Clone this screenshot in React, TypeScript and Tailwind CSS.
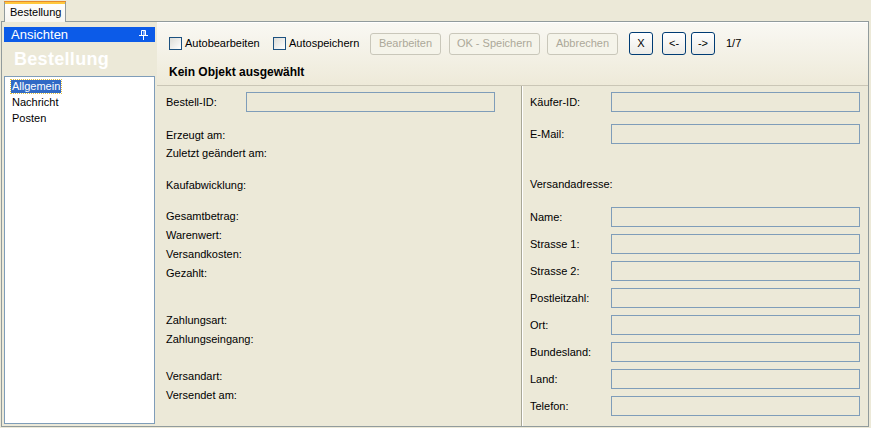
import React from 'react';

const Checkbox = ({ label, width }: { label: string; width: string }) => (
  <div className={`flex items-center ${width}`}>
    <div className="w-[13px] h-[13px] border border-[#1C5180] bg-gradient-to-br from-[#DCDCD7] to-white" />
    <span className="ml-[3px] text-[11px] leading-[13px] text-black">{label}</span>
  </div>
);

const DisabledButton = ({ label, width }: { label: string; width: string }) => (
  <div
    className={`${width} h-[22px] flex items-center justify-center rounded-[3px] border border-[#C9C7BA] bg-[#F5F4EA] text-[11px] text-[#ACA899]`}
  >
    {label}
  </div>
);

const NavButton = ({ label, width }: { label: string; width: string }) => (
  <div
    className={`${width} h-[23px] flex items-center justify-center rounded-[3px] border border-[#003C74] bg-gradient-to-b from-white to-[#ECEBE6] text-[11px] text-black`}
  >
    {label}
  </div>
);

const Field = ({ label, mt }: { label: string; mt: string }) => (
  <div className={`flex items-center h-[20px] ${mt}`}>
    <span className="w-[81px] text-[11px] leading-[20px]">{label}</span>
    <div className="w-[249px] h-[20px] border border-[#7F9DB9] bg-[#ECE9D8]" />
  </div>
);

const Label = ({ text, mt, h }: { text: string; mt?: string; h: string }) => (
  <div className={`text-[11px] ${h} ${mt ?? ''}`}>{text}</div>
);

const PinIcon = () => (
  <svg width="9" height="10" viewBox="0 0 9 10" fill="none">
    <path d="M2.5 0.5h4v5h-4z" stroke="white" strokeWidth="1" />
    <path d="M5 1v4.5" stroke="white" strokeWidth="1" />
    <path d="M0 5.5h9" stroke="white" strokeWidth="1" />
    <path d="M4.5 6v4" stroke="white" strokeWidth="1" />
  </svg>
);

export default function App() {
  return (
    <div className="w-[871px] h-[428px] bg-[#ECE9D8] font-['Liberation_Sans',Arial,sans-serif] text-black overflow-hidden">
      {/* Tab strip */}
      <div className="h-[21px] flex items-end pl-[4px]">
        <div className="relative z-10 w-[62px] h-[21px] -mb-[1px] border-x border-[#919B9C] bg-gradient-to-b from-white to-[#F7F6F1] flex flex-col">
          <div className="h-[1px] bg-[#E68B2C] -mx-[1px]" />
          <div className="h-[2px] bg-[#FFC83C]" />
          <div className="flex-1 pl-[5px] text-[11px] leading-[16px]">Bestellung</div>
        </div>
      </div>

      {/* Panel */}
      <div className="ml-[1px] w-[868px] h-[406px] border border-[#919B9C] flex">
        {/* Left column */}
        <div className="ml-[2px] w-[151px] pt-[5px] flex flex-col">
          <div className="h-[15px] bg-[#0C5BE8] flex items-center justify-between pl-[7px] pr-[7px]">
            <span className="text-white text-[13px] leading-[15px]">Ansichten</span>
            <PinIcon />
          </div>
          <div className="h-[34px] pl-[10px] pt-[5px] text-white font-bold text-[18px] leading-[24px] tracking-[0.3px]">
            Bestellung
          </div>
          <div className="h-[348px] border border-[#7F9DB9] bg-white pt-[1px] pl-[6px]">
            <div className="h-[16px] flex items-center">
              <span className="bg-[#316AC5] text-white text-[11px] leading-[13px] px-[1px] outline outline-1 outline-dotted outline-[#E0C040]">
                Allgemein
              </span>
            </div>
            <div className="h-[16px] text-[11px] leading-[16px] pl-[1px]">Nachricht</div>
            <div className="h-[17px] text-[11px] leading-[17px] pl-[1px]">Posten</div>
          </div>
        </div>

        {/* Right column */}
        <div className="ml-[2px] w-[711px] flex flex-col">
          {/* Header */}
          <div className="h-[64px] border-t border-white border-b border-b-[#CAC6B6] bg-gradient-to-b from-[#F9F8F3] to-[#EEEAD9] pl-[12px] pt-[9px]">
            <div className="flex items-center h-[23px]">
              <Checkbox label="Autobearbeiten" width="w-[104px]" />
              <Checkbox label="Autospeichern" width="w-[97px]" />
              <DisabledButton label="Bearbeiten" width="w-[71px]" />
              <div className="w-[8px]" />
              <DisabledButton label="OK - Speichern" width="w-[91px]" />
              <div className="w-[7px]" />
              <DisabledButton label="Abbrechen" width="w-[71px]" />
              <div className="w-[11px]" />
              <NavButton label="X" width="w-[24px]" />
              <div className="w-[9px]" />
              <NavButton label="<-" width="w-[24px]" />
              <div className="w-[5px]" />
              <NavButton label="->" width="w-[24px]" />
              <span className="ml-[11px] text-[11px]">1/7</span>
            </div>
            <div className="mt-[9px] h-[16px] text-[12px] font-bold leading-[16px]">Kein Objekt ausgewählt</div>
          </div>

          {/* Form */}
          <div className="flex flex-1">
            <div className="w-[364px] pl-[9px] pt-[6px]">
              <div className="flex items-center h-[20px]">
                <span className="w-[80px] text-[11px]">Bestell-ID:</span>
                <div className="w-[249px] h-[20px] border border-[#7F9DB9] bg-[#ECE9D8]" />
              </div>
              <Label text="Erzeugt am:" mt="mt-[14px]" h="h-[18px] leading-[18px]" />
              <Label text="Zuletzt geändert am:" h="h-[18px] leading-[18px]" />
              <Label text="Kaufabwicklung:" mt="mt-[14px]" h="h-[18px] leading-[18px]" />
              <Label text="Gesamtbetrag:" mt="mt-[13px]" h="h-[19px] leading-[19px]" />
              <Label text="Warenwert:" h="h-[19px] leading-[19px]" />
              <Label text="Versandkosten:" h="h-[19px] leading-[19px]" />
              <Label text="Gezahlt:" h="h-[19px] leading-[19px]" />
              <Label text="Zahlungsart:" mt="mt-[28px]" h="h-[19px] leading-[19px]" />
              <Label text="Zahlungseingang:" h="h-[19px] leading-[19px]" />
              <Label text="Versandart:" mt="mt-[18px]" h="h-[19px] leading-[19px]" />
              <Label text="Versendet am:" h="h-[18px] leading-[18px]" />
            </div>

            <div className="w-[1px] bg-[#A8A797]" />
            <div className="w-[1px] bg-white" />

            <div className="flex-1 pl-[7px] pt-[6px]">
              <Field label="Käufer-ID:" mt="" />
              <Field label="E-Mail:" mt="mt-[12px]" />
              <Label text="Versandadresse:" mt="mt-[31px]" h="h-[18px] leading-[18px]" />
              <Field label="Name:" mt="mt-[14px]" />
              <Field label="Strasse 1:" mt="mt-[7px]" />
              <Field label="Strasse 2:" mt="mt-[7px]" />
              <Field label="Postleitzahl:" mt="mt-[7px]" />
              <Field label="Ort:" mt="mt-[7px]" />
              <Field label="Bundesland:" mt="mt-[7px]" />
              <Field label="Land:" mt="mt-[7px]" />
              <Field label="Telefon:" mt="mt-[7px]" />
            </div>
          </div>
        </div>
      </div>
    </div>
  );
}
